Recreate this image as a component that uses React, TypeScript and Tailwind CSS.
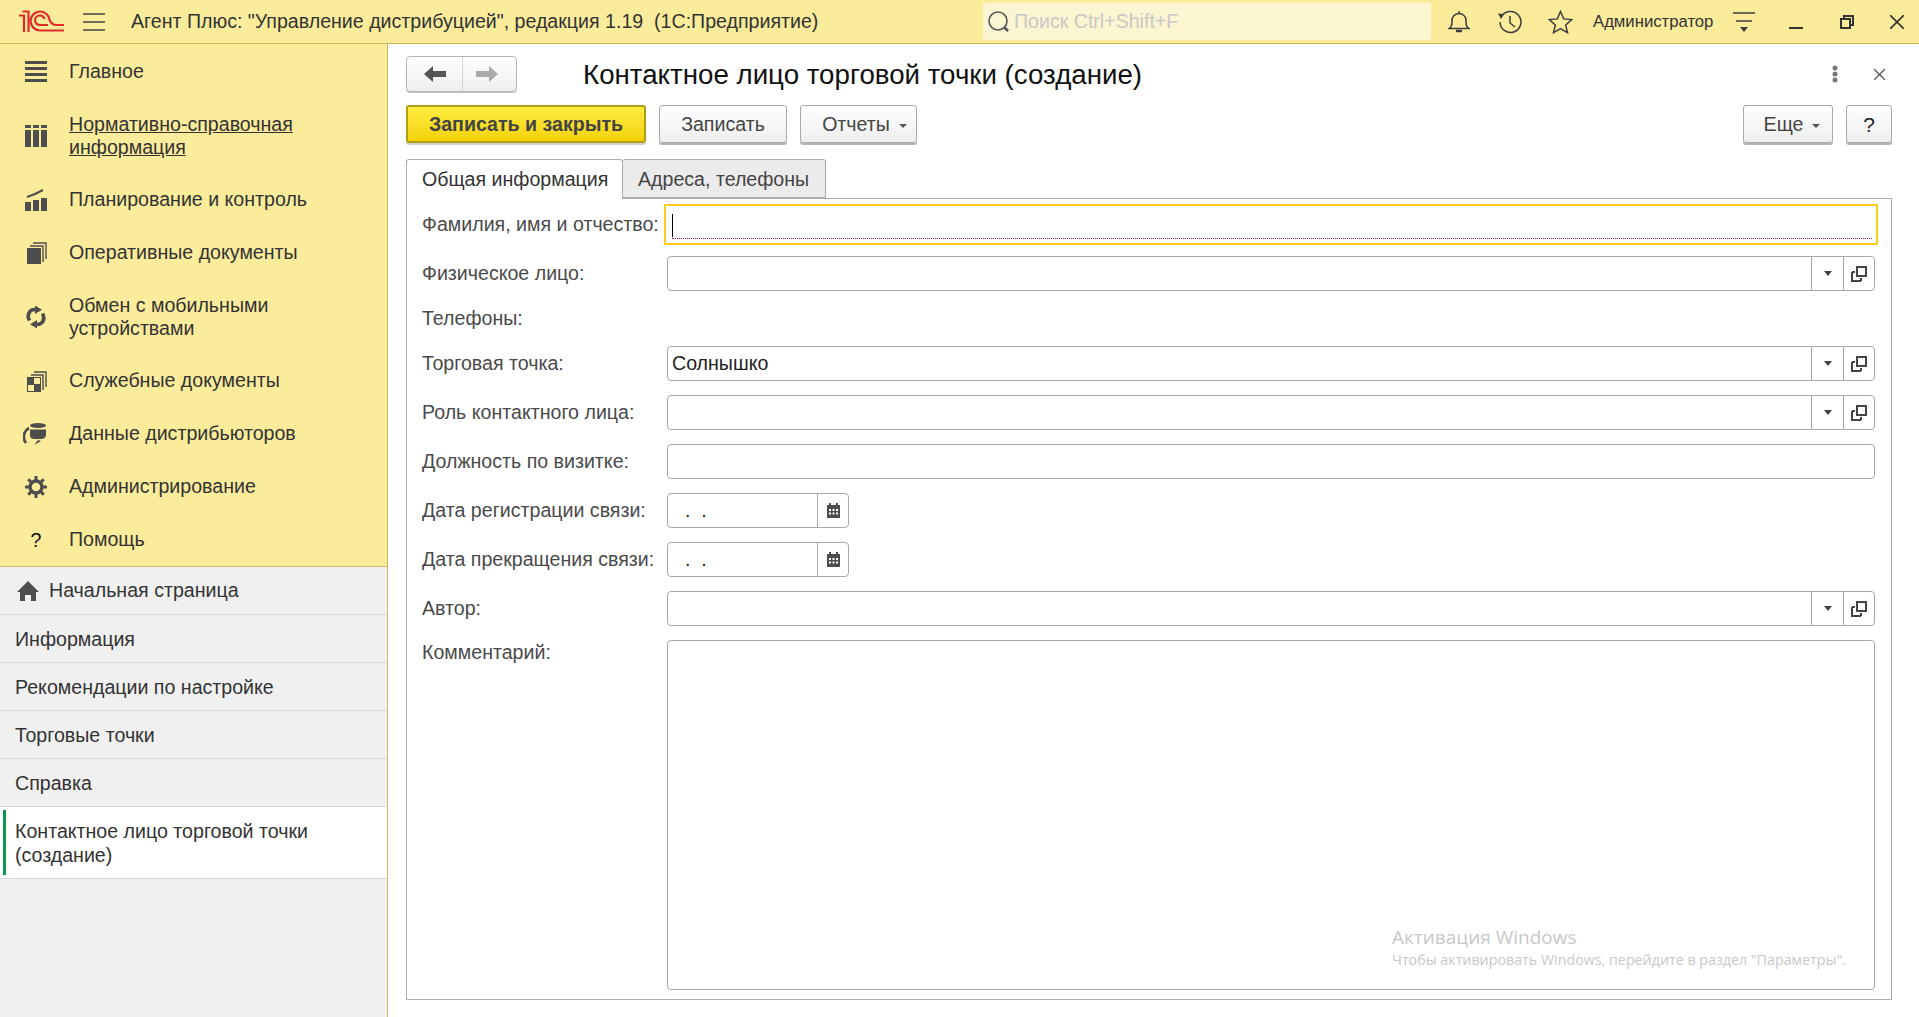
import type { ReactNode } from 'react';

function Logo() {
  return (
    <svg width="45" height="23" viewBox="0 0 45 23" fill="none" stroke="#e02a2a" strokeWidth="2.2" className="ml-[19px] shrink-0">
      <path d="M0 5.5h5V22" />
      <path d="M3.5 1.5H9.5V22" />
      <path d="M45 20.5H21A9.5 9.5 0 1 1 29.5 6.5Q31.5 15 37 15H45" />
      <path d="M29 15H21A4.8 4.8 0 1 1 25.5 9" />
    </svg>
  );
}

function MenuGlyph({ icon }: { icon: string }) {
  if (icon === 'lines')
    return (
      <svg width="22" height="22" viewBox="0 0 22 22" fill="#4d4d4d">
        <rect y="0" width="22" height="3" />
        <rect y="6" width="22" height="3" />
        <rect y="12" width="22" height="3" />
        <rect y="18" width="22" height="3" />
      </svg>
    );
  if (icon === 'table')
    return (
      <svg width="22" height="22" viewBox="0 0 22 22" fill="#4d4d4d">
        <path d="M0 0h6v3H0zM8 0h6v3H8zM16 0h6v3h-6z" />
        <path d="M0 5h6v17H0zM8 5h6v17H8zM16 5h6v17h-6z" />
      </svg>
    );
  if (icon === 'chart')
    return (
      <svg width="22" height="22" viewBox="0 0 22 22" fill="#4d4d4d">
        <path d="M0 13h6v9H0zM8 11h6v11H8zM16 9h6v13h-6z" />
        <path d="M2 8 10 5l8-4" stroke="#4d4d4d" strokeWidth="2" fill="none" />
      </svg>
    );
  if (icon === 'docs')
    return (
      <svg width="22" height="22" viewBox="0 0 22 22" fill="#4d4d4d">
        <path d="M2 6h14v16H2z" />
        <path d="M18 20V4H5M21 17V1H8" stroke="#4d4d4d" strokeWidth="1.4" fill="none" />
      </svg>
    );
  if (icon === 'sync')
    return (
      <svg width="22" height="22" viewBox="0 0 22 22" fill="none" stroke="#4d4d4d" strokeWidth="3.6">
        <path d="M4.500 14.500C1.500 9 4 3.500 10 3.500" />
        <path d="M17.500 7.500C20.500 13 18 18.500 12 18.500" />
        <path d="M10 -.5V8l7-4.300zM12 14v8.500L5 18.300z" fill="#4d4d4d" stroke="none" />
      </svg>
    );
  if (icon === 'service')
    return (
      <svg width="22" height="22" viewBox="0 0 22 22">
        <path d="M2 7h14v15H2z" fill="#4d4d4d" />
        <path d="M9 8h6v6H9zM3 15h6v6H3z" fill="#fbec9c" />
        <path d="M18 20V5H6M21 17V2H9" stroke="#4d4d4d" strokeWidth="1.4" fill="none" />
      </svg>
    );
  if (icon === 'dist')
    return (
      <svg width="24" height="22" viewBox="0 0 24 22" fill="#4d4d4d">
        <ellipse cx="15" cy="2.500" rx="8" ry="2.500" />
        <path d="M7 6.500h16v6q-1 3.500-5 3.500h-6q-5 0-5-3.500z" />
        <path d="M6 5A10 10 0 0 0 3 20" stroke="#4d4d4d" strokeWidth="2.800" fill="none" />
        <path d="M11 22l4-5 3 1z" />
      </svg>
    );
  if (icon === 'gear')
    return (
      <svg width="22" height="22" viewBox="0 0 22 22" fill="none" stroke="#4d4d4d">
        <circle cx="11" cy="11" r="6" strokeWidth="3.4" />
        <path d="M11 0v5M11 17v5M0 11h5M17 11h5M3.200 3.200l3.500 3.500M15.300 15.300l3.500 3.500M18.800 3.200l-3.500 3.500M6.700 15.300l-3.500 3.500" strokeWidth="3" />
      </svg>
    );
  return <span className="block w-[22px] text-center text-[19.6px] leading-[22px] text-[#111]">?</span>;
}

const menu = [
  { icon: 'lines', lines: ['Главное'] },
  { icon: 'table', lines: ['Нормативно-справочная', 'информация'], link: true },
  { icon: 'chart', lines: ['Планирование и контроль'] },
  { icon: 'docs', lines: ['Оперативные документы'] },
  { icon: 'sync', lines: ['Обмен с мобильными', 'устройствами'] },
  { icon: 'service', lines: ['Служебные документы'] },
  { icon: 'dist', lines: ['Данные дистрибьюторов'] },
  { icon: 'gear', lines: ['Администрирование'] },
  { icon: 'help', lines: ['Помощь'] },
];

const openTabs = ['Информация', 'Рекомендации по настройке', 'Торговые точки', 'Справка'];

function Sidebar() {
  return (
    <aside className="flex w-[388px] shrink-0 flex-col border-r border-[#cdb85e] bg-[#f0f0f0]">
      <nav className="h-[523px] shrink-0 border-b border-[#cdb85e] bg-[#fbec9c] pt-[1px]">
        {menu.map(item => (
          <div
            key={item.lines[0]}
            className={`flex items-center text-[19.6px] leading-[23px] text-[#333] ${item.lines.length > 1 ? 'py-[14.5px]' : 'py-[15px]'}`}
          >
            <div className="flex w-[69px] shrink-0 justify-end pr-[22px]">
              <MenuGlyph icon={item.icon} />
            </div>
            <div className={item.link ? 'underline' : ''}>
              {item.lines.map(l => (
                <div key={l}>{l}</div>
              ))}
            </div>
          </div>
        ))}
      </nav>
      <div className="flex h-[48px] items-center gap-[10px] border-b border-[#d9d9d9] pl-[17px] text-[19.6px] text-[#333]">
        <svg width="22" height="20" viewBox="0 0 22 20" fill="#4d4d4d">
          <path d="M11 0 22 11h-3v9h-5v-6H8v6H3v-9H0z" />
        </svg>
        <span className="pt-[1px]">Начальная страница</span>
      </div>
      {openTabs.map(t => (
        <div key={t} className="flex h-[48px] items-center border-b border-[#d9d9d9] pl-[15px] pt-[2px] text-[19.6px] text-[#333]">
          {t}
        </div>
      ))}
      <div className="flex h-[72px] items-center border-b border-[#d9d9d9] bg-white py-[3px] pl-[3px] text-[19.6px] leading-[24px] text-[#333]">
        <div className="h-full w-[3px] bg-[#0a9a4f]" />
        <div className="pl-[9px]">
          Контактное лицо торговой точки
          <br />
          (создание)
        </div>
      </div>
    </aside>
  );
}

function Header() {
  return (
    <header className="flex h-[44px] shrink-0 items-center border-b border-[#cdb85e] bg-[#fbec9c] text-[#333]">
      <Logo />
      <svg width="22" height="18" viewBox="0 0 22 18" stroke="#444" strokeWidth="1.5" className="ml-[19px] shrink-0">
        <path d="M0 1h22M0 9h22M0 17h22" />
      </svg>
      <div className="ml-[26px] w-[852px] shrink-0 whitespace-pre text-[19.6px]">
        {'Агент Плюс: "Управление дистрибуцией", редакция 1.19  (1С:Предприятие)'}
      </div>
      <div className="flex h-[37px] w-[448px] shrink-0 items-center rounded-[2px] bg-[#fcf5d2] pl-[4px]">
        <svg width="24" height="24" viewBox="0 0 24 24" fill="none" stroke="#555" strokeWidth="1.600">
          <circle cx="11" cy="11" r="9" />
          <path d="M17.500 17.500 21 21" strokeWidth="2.600" />
        </svg>
        <span className="ml-[3px] text-[19.6px] text-[#c9c8c4]">Поиск Ctrl+Shift+F</span>
      </div>
      <svg width="22" height="24" viewBox="0 0 22 24" fill="none" stroke="#3d3d3d" strokeWidth="1.500" className="ml-[17px] shrink-0">
        <path d="M1 18.500c3-2 3-4 3-8a7 7 0 0 1 14 0c0 4 0 6 3 8z" />
        <path d="M11 1v2.500" />
        <path d="M8 21h6" strokeWidth="2.500" />
      </svg>
      <svg width="25" height="24" viewBox="0 0 25 24" fill="none" stroke="#3d3d3d" strokeWidth="1.500" className="ml-[27px] shrink-0">
        <path d="M4 7.500A10.500 10.500 0 1 1 3 12" />
        <path d="M1 3.500 7 4l-3 5z" fill="#3d3d3d" stroke="none" />
        <path d="M13 6v7l5 4" />
      </svg>
      <svg width="25" height="24" viewBox="0 0 25 24" fill="none" stroke="#3d3d3d" strokeWidth="1.500" className="ml-[26px] shrink-0">
        <path d="m12.500 1.500 3.200 7.400 8 .7-6 5.300 1.800 7.800-7-4.100-7 4.100 1.800-7.800-6-5.300 8-.7z" />
      </svg>
      <div className="ml-[20px] w-[120px] shrink-0 whitespace-nowrap text-[16.7px]">Администратор</div>
      <svg width="22" height="22" viewBox="0 0 22 22" stroke="#3d3d3d" strokeWidth="1.500" className="ml-[20px] shrink-0">
        <path d="M0 2h22M3 10h16" />
        <path d="M7 16h8l-4 5z" fill="#3d3d3d" stroke="none" />
      </svg>
      <svg width="14" height="14" viewBox="0 0 14 14" stroke="#333" strokeWidth="2" className="ml-[34px] mt-[13px] shrink-0">
        <path d="M0 7h14" />
      </svg>
      <svg width="14" height="14" viewBox="0 0 14 14" fill="none" stroke="#333" strokeWidth="2" className="ml-[37px] shrink-0">
        <path d="M1 4h9v9H1zM4 4V1h9v9h-3" />
      </svg>
      <svg width="14" height="14" viewBox="0 0 14 14" stroke="#333" strokeWidth="1.600" className="ml-[36px] shrink-0">
        <path d="m0 0 14 14M14 0 0 14" />
      </svg>
    </header>
  );
}

function Caret() {
  return <span className="ml-[9px] mt-[2px] inline-block h-0 w-0 border-x-[4px] border-t-[4px] border-x-transparent border-t-[#555]" />;
}

function Btn({ w, children }: { w: string; children: ReactNode }) {
  return (
    <button className={`flex h-[38px] items-center justify-center rounded-[3px] border border-[#a9a9a9] bg-gradient-to-b from-white to-[#eeeeee] pt-[1px] text-[19.6px] text-[#444] shadow-[0_2px_0_#b5b5b5] ${w}`}>
      {children}
    </button>
  );
}

function PickIcons() {
  return (
    <>
      <div className="flex w-[32px] items-center justify-center border-l border-[#a8a8a8]">
        <span className="h-0 w-0 border-x-[4px] border-t-[5px] border-x-transparent border-t-[#444]" />
      </div>
      <div className="flex w-[31px] items-center justify-center border-l border-[#a8a8a8]">
        <svg width="16" height="16" viewBox="0 0 16 16" fill="none" stroke="#444" strokeWidth="2">
          <path d="M6 1h9v9H6z" />
          <path d="M1 6v9h9" />
          <path d="M1 6h3M10 15v-3" />
        </svg>
      </div>
    </>
  );
}

function Field({ value, pick }: { value?: string; pick?: boolean }) {
  return (
    <div className="flex h-[35px] flex-1 rounded-[4px] border border-[#a8a8a8]">
      <div className="flex-1 pl-[4px] text-[19.6px] leading-[33px] text-[#222]">{value}</div>
      {pick && <PickIcons />}
    </div>
  );
}

function DateField() {
  return (
    <div className="flex h-[35px] w-[182px] rounded-[4px] border border-[#a8a8a8]">
      <div className="flex-1 whitespace-pre pl-[17px] text-[19.6px] leading-[33px] text-[#222]">{'.  .'}</div>
      <div className="flex w-[31px] items-center justify-center border-l border-[#a8a8a8]">
        <svg width="13" height="15" viewBox="0 0 13 15" fill="#4d4d4d">
          <path d="M2 0h2v2h5V0h2v2h2v13H0V2h2z" />
          <path d="M2 6h2v2H2zM5.500 6h2v2h-2zM9 6h2v2H9zM2 9.500h2v2H2zM5.500 9.500h2v2h-2zM9 9.500h2v2H9z" fill="#fff" />
        </svg>
      </div>
    </div>
  );
}

function Row({ label, children }: { label: string; children?: ReactNode }) {
  return (
    <div className="flex items-center">
      <div className="w-[245px] shrink-0 whitespace-nowrap pt-[1px] text-[19.6px] text-[#4a4a4a]">{label}</div>
      {children}
    </div>
  );
}

export default function App() {
  return (
    <div className="flex h-screen flex-col overflow-hidden bg-white [font-family:'Liberation_Sans',Arial,sans-serif]">
      <Header />
      <div className="flex min-h-0 flex-1">
        <Sidebar />
        <main className="relative flex min-w-0 flex-1 flex-col pb-[17px] pl-[18px] pr-[27px] pt-[12px]">
          <div className="flex h-[36px] shrink-0 items-center">
            <div className="flex h-[36px] w-[111px] rounded-[4px] border border-[#b5b5b5] bg-gradient-to-b from-white to-[#eeeeee] shadow-[0_1px_0_#c5c5c5]">
              <div className="flex w-[56px] items-center justify-center border-r border-[#d5d5d5]">
                <svg width="22" height="16" viewBox="0 0 22 16" fill="#555">
                  <path d="M0 8 9 0v5h13v6H9v5z" />
                </svg>
              </div>
              <div className="flex flex-1 items-center justify-center pr-[5px]">
                <svg width="22" height="16" viewBox="0 0 22 16" fill="#aaa">
                  <path d="M22 8 13 0v5H0v6h13v5z" />
                </svg>
              </div>
            </div>
            <h1 className="ml-[66px] pt-[1px] text-[27.7px] font-normal text-[#111]">Контактное лицо торговой точки (создание)</h1>
            <div className="ml-auto flex items-center">
              <svg width="6" height="18" viewBox="0 0 6 18" fill="#777">
                <circle cx="3" cy="3" r="2.500" />
                <circle cx="3" cy="9" r="2.500" />
                <circle cx="3" cy="15" r="2.500" />
              </svg>
              <svg width="11" height="11" viewBox="0 0 11 11" stroke="#555" strokeWidth="1.300" className="ml-[36px] mr-[7px]">
                <path d="m0 0 11 11M11 0 0 11" />
              </svg>
            </div>
          </div>

          <div className="mt-[13px] flex h-[38px] shrink-0 items-center">
            <button className="flex h-[38px] w-[240px] items-center justify-center rounded-[3px] border-2 border-[#b49c10] bg-gradient-to-b from-[#ffec3d] to-[#f3d200] pt-[1px] text-[19.6px] font-bold text-[#444] shadow-[0_2px_0_#cfcfcf]">
              Записать и закрыть
            </button>
            <div className="ml-[13px]">
              <Btn w="w-[128px]">Записать</Btn>
            </div>
            <div className="ml-[13px]">
              <Btn w="w-[117px] pl-[12px]">
                Отчеты
                <Caret />
              </Btn>
            </div>
            <div className="ml-auto flex gap-[13px]">
              <Btn w="w-[90px] pl-[8px]">
                Еще
                <Caret />
              </Btn>
              <Btn w="w-[46px]">
                <span className="text-[21px] text-[#222]">?</span>
              </Btn>
            </div>
          </div>

          <div className="mt-[16px] flex h-[40px] shrink-0 text-[19.6px]">
            <div className="relative z-10 flex h-[40px] w-[217px] items-center rounded-t-[3px] border border-b-0 border-[#adadad] bg-white pl-[15px] text-[#333]">
              Общая информация
            </div>
            <div className="flex h-[39px] w-[203px] items-center rounded-t-[3px] border border-l-0 border-[#adadad] bg-[#ebebeb] pl-[15px] pt-[2px] text-[#444]">
              Адреса, телефоны
            </div>
          </div>

          <div className="-mt-px flex min-h-0 flex-1 flex-col border border-[#adadad] pb-[9px] pl-[15px] pr-[16px] pt-[5px]">
            <div className="mb-[11px] flex h-[41px] items-center">
              <div className="w-[242px] shrink-0 whitespace-nowrap pt-[1px] text-[19.6px] text-[#4a4a4a]">Фамилия, имя и отчество:</div>
              <div className="-mr-[3px] h-[41px] flex-1 border-2 border-[#fccb1f] pl-[6px] pr-[4px]">
                <div className="flex h-[33px] items-end border-b border-dotted border-[#c8102e] pb-px">
                  <div className="h-[23px] w-px bg-black" />
                </div>
              </div>
            </div>

            <div className="flex min-h-0 flex-1 flex-col gap-[14px]">
              <Row label="Физическое лицо:">
                <Field pick />
              </Row>
              <div className="flex h-[27px] items-center pt-[1px] text-[19.6px] text-[#4a4a4a]">Телефоны:</div>
              <Row label="Торговая точка:">
                <Field value="Солнышко" pick />
              </Row>
              <Row label="Роль контактного лица:">
                <Field pick />
              </Row>
              <Row label="Должность по визитке:">
                <Field />
              </Row>
              <Row label="Дата регистрации связи:">
                <DateField />
              </Row>
              <Row label="Дата прекращения связи:">
                <DateField />
              </Row>
              <Row label="Автор:">
                <Field pick />
              </Row>
              <div className="flex min-h-0 flex-1">
                <div className="w-[245px] shrink-0 pt-[1px] text-[19.6px] leading-[23px] text-[#4a4a4a]">Комментарий:</div>
                <div className="flex-1 rounded-[4px] border border-[#a8a8a8]" />
              </div>
            </div>
          </div>

          {/* Windows activation watermark */}
          <div className="pointer-events-none absolute left-[1004px] top-[880px] text-[#c8c8c8] [font-family:'Open_Sans',sans-serif]">
            <div className="text-[19px] leading-[26px]">Активация Windows</div>
            <div className="text-[14.27px] leading-[20px]">Чтобы активировать Windows, перейдите в раздел "Параметры".</div>
          </div>
        </main>
      </div>
    </div>
  );
}
